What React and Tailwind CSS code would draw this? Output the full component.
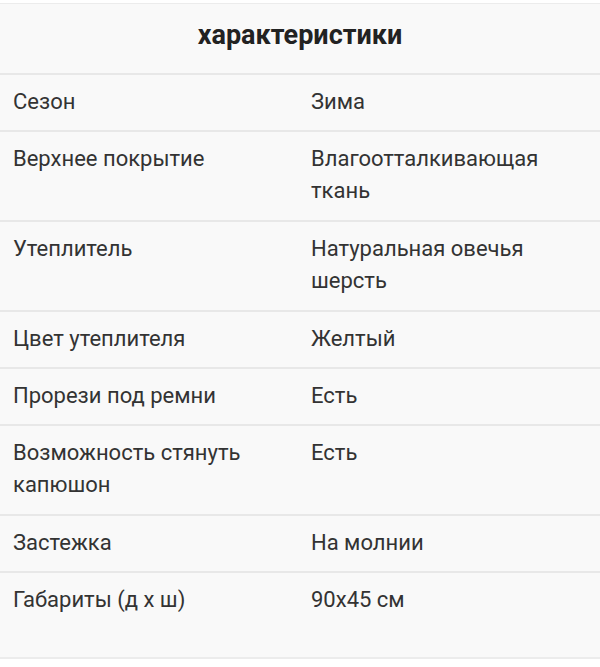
export default function App() {
  const rows = [
    ["Сезон", "Зима", false],
    ["Верхнее покрытие", "Влагоотталкивающая ткань", true],
    ["Утеплитель", "Натуральная овечья шерсть", true],
    ["Цвет утеплителя", "Желтый", false],
    ["Прорези под ремни", "Есть", false],
    ["Возможность стянуть капюшон", "Есть", true],
    ["Застежка", "На молнии", false],
    ["Габариты (д х ш)", "90x45 см", false],
  ];
  return (
    <div className="w-[600px] h-[667px] bg-white overflow-hidden" style={{ fontFamily: "Roboto, 'Noto Sans', sans-serif" }}>
      <div className="h-[3px] bg-white" />
      <div className="bg-[#f9f9f9] border-t border-[#ececec]">
        <div className="h-[69px] pb-[6px] flex items-center justify-center text-[27px] font-bold text-[#222]">характеристики</div>
        {rows.map(([k, v, dbl], i) => (
          <div
            key={i}
            className={`flex border-t-2 border-[#e8e8e8] text-[22px] leading-[32px] text-[#333] pt-[11px] ${i === rows.length - 1 ? "h-[86px]" : dbl ? "pb-[13px]" : "pb-[12px]"}`}
          >
            <div className="w-[311px] pl-[13px] pr-[40px]">{k}</div>
            <div className="w-[260px]">{v}</div>
          </div>
        ))}
      </div>
      <div className="border-t-2 border-[#ececec] bg-white h-[20px]" />
    </div>
  );
}
